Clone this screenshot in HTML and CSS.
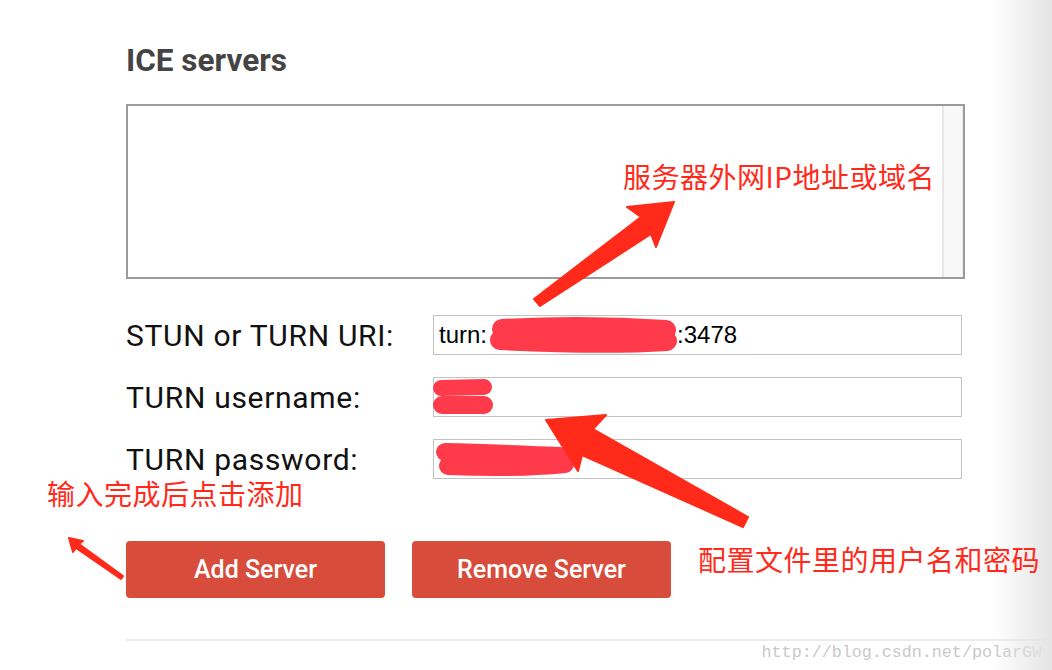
FILE: index.html
```html
<!DOCTYPE html>
<html lang="zh-CN">
<head>
<meta charset="utf-8">
<title>ICE servers</title>
<link rel="stylesheet" href="styles.css">
</head>
<body>
<main class="page">
  <h2 class="title">ICE servers</h2>
  <div class="servers"><div class="scrollbar"></div></div>
  <div class="fields">
    <div class="row">
      <label class="label">STUN or TURN URI:</label>
      <div class="input">turn:<span class="hidden-part"></span>:3478</div>
    </div>
    <div class="row">
      <label class="label">TURN username:</label>
      <div class="input"></div>
    </div>
    <div class="row">
      <label class="label">TURN password:</label>
      <div class="input"></div>
    </div>
  </div>
  <div class="buttons">
    <button class="btn">Add Server</button>
    <button class="btn">Remove Server</button>
  </div>
  <div class="rule"></div>
  <div class="watermark">http://blog.csdn.net/polarGW</div>
</main>

<div class="shade"></div>

<svg class="marks" width="1052" height="670" viewBox="0 0 1052 670" xmlns="http://www.w3.org/2000/svg">
  <g class="scribble" fill="none" stroke="#ff3a4b" stroke-linecap="round" stroke-linejoin="round">
    <path d="M502 329 C560 326 620 327 666 330" stroke-width="20"/>
    <path d="M500 340 C560 343 620 344 667 341" stroke-width="20"/>
    <path d="M441 388 L484 387" stroke-width="16"/>
    <path d="M442 405 L484 405" stroke-width="18"/>
    <path d="M445 452 C490 453 530 455 560 456" stroke-width="18"/>
    <path d="M448 466 C495 468 535 467 565 464" stroke-width="18"/>
  </g>
  <g fill="#ff2a1a" stroke="#ff2a1a" stroke-width="2" stroke-linejoin="round">
    <polygon points="674,202 627,207 641,217 534,299 540,306 651,234 656,247"/>
    <polygon points="546,420 606,415 593,429 748,517 743,527 582,455 578,471"/>
    <polygon points="69,538 83,541 79,544 123,576 121,579 76,548 73,552"/>
  </g>
</svg>

<div class="note note-ip">服务器外网IP地址或域名</div>
<div class="note note-add">输入完成后点击添加</div>
<div class="note note-cred">配置文件里的用户名和密码</div>
</body>
</html>
```

FILE: styles.css
```css
html, body {
  margin: 0;
  padding: 0;
  background: #ffffff;
}

body {
  position: relative;
  width: 1052px;
  height: 670px;
  overflow: hidden;
  font-family: Roboto, "Liberation Sans", sans-serif;
}

.page {
  padding: 41px 0 0 126px;
}

.title {
  margin: 0 0 23px;
  font-size: 31.5px;
  line-height: 40px;
  font-weight: 700;
  color: #444444;
}

.servers {
  width: 839px;
  height: 175px;
  box-sizing: border-box;
  border: 2px solid #9b9b9b;
  display: flex;
  justify-content: flex-end;
}

.scrollbar {
  width: 21px;
  height: 100%;
  box-sizing: border-box;
  border-left: 2px solid #e7e7e7;
  border-right: 1px solid #ececec;
  background: #f8f8f8;
}

.fields {
  margin-top: 36px;
  display: flex;
  flex-direction: column;
  gap: 22px;
}

.row {
  display: flex;
  align-items: center;
  height: 40px;
}

.label {
  width: 307px;
  font-size: 30px;
  letter-spacing: 0.7px;
  font-weight: 400;
  color: #111111;
}

.input {
  width: 529px;
  height: 40px;
  box-sizing: border-box;
  border: 1px solid #c3c3c3;
  padding: 0 5px;
  display: flex;
  align-items: center;
  font-family: "Liberation Sans", Arial, sans-serif;
  font-size: 24px;
  color: #000000;
}

.hidden-part {
  display: inline-block;
  width: 190px;
}

.buttons {
  margin-top: 62px;
  display: flex;
  gap: 27px;
}

.btn {
  width: 259px;
  height: 57px;
  border: none;
  border-radius: 4px;
  background: #d84c3b;
  color: #ffffff;
  font-family: Roboto, "Liberation Sans", sans-serif;
  font-size: 25px;
  font-weight: 500;
  padding: 0;
}

.rule {
  margin-top: 41px;
  height: 2px;
  background: #ececec;
}

.watermark {
  text-align: right;
  padding-right: 10px;
  margin-top: 1px;
  font-family: "Liberation Mono", "Courier New", monospace;
  font-size: 16.7px;
  line-height: 22px;
  color: #c9c9c9;
}

.shade {
  position: absolute;
  top: 0;
  right: 0;
  width: 60px;
  height: 100%;
  background: linear-gradient(to right, rgba(230, 230, 230, 0), #e4e4e4);
  pointer-events: none;
}

.marks {
  position: absolute;
  top: 0;
  left: 0;
  pointer-events: none;
}

.note {
  position: absolute;
  font-family: "Noto Sans CJK SC", "Noto Sans", sans-serif;
  font-size: 28px;
  line-height: 28px;
  font-weight: 400;
  letter-spacing: 0.5px;
  color: #ff2a1a;
  white-space: nowrap;
}

.note-ip {
  left: 623px;
  top: 162px;
}

.note-add {
  left: 47px;
  top: 479px;
}

.note-cred {
  left: 698px;
  top: 545px;
}
```
